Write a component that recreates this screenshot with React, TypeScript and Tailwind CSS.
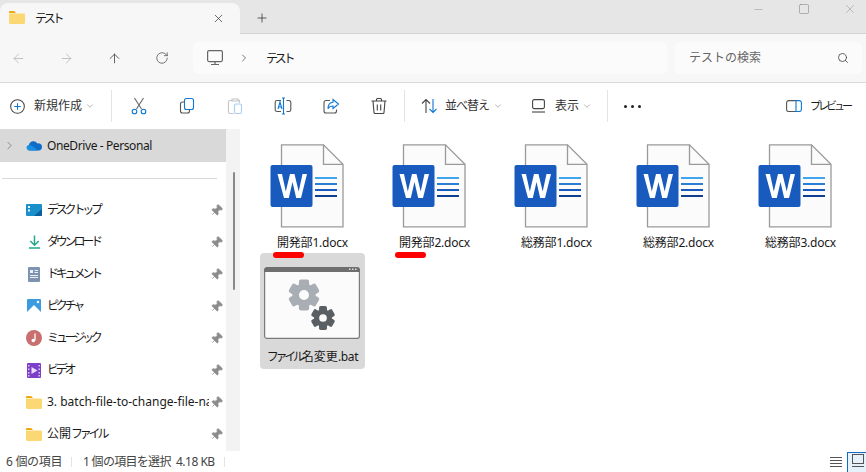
import { ArrowLeft, ArrowRight, ArrowUp, ChevronDown, ChevronRight, Minus, Pin, Plus, RotateCw, Search, Square, X } from "lucide-react";
import type { ReactNode } from "react";

const FONT = "font-['Noto_Sans','Noto_Sans_CJK_JP',sans-serif]";
const KANA = "tracking-[-3.2px]";

const FolderIcon = ({ className = "" }: { className?: string }) => (
  <svg viewBox="0 0 16 13" className={className}>
    <path d="M0 1.2C0 .5.5 0 1.2 0h3.6c.4 0 .7.2 1 .5L7 2H0z" fill="#f0a70f" />
    <path d="M0 2.5h14.8c.7 0 1.2.5 1.2 1.2v8.1c0 .7-.5 1.2-1.2 1.2H1.2C.5 13 0 12.500 0 11.800z" fill="#fcd874" />
  </svg>
);

const WordIcon = () => (
  <svg viewBox="0 0 74 84" className="w-[74px] h-[84px] mr-[11px]">
    <path d="M11.500.8h42l19.500 19.500v62.500h-61.500z" fill="#fbfbfb" stroke="#9a9a9a" strokeWidth="1.300" />
    <path d="M53.500.8v19.500h19.500" fill="none" stroke="#9a9a9a" strokeWidth="1.300" />
    <rect x="45" y="33" width="22" height="2" fill="#41a5ee" />
    <rect x="45" y="39" width="22" height="2" fill="#2b7cd3" />
    <rect x="45" y="45" width="22" height="2" fill="#185abd" />
    <rect x="45" y="51" width="22" height="2" fill="#103f91" />
    <rect x="0.500" y="21" width="42" height="42" rx="2" fill="#185abd" />
    <path d="M7.500 30h4.500l3.800 17.500L20 30h4.500l4.200 17.500L32.500 30H37l-6 24h-4.800l-3.700-16-3.700 16H14z" fill="#fff" />
  </svg>
);

const Gear = ({ x, y, r, fill }: { x: number; y: number; r: number; fill: string }) => (
  <g transform={`translate(${x} ${y})`}>
    {[0, 60, 120].map((a) => (
      <rect key={a} x={-r * 0.33} y={-r} width={r * 0.66} height={r * 2} rx={r * 0.14} fill={fill} transform={`rotate(${a})`} />
    ))}
    <circle r={r * 0.75} fill={fill} />
    <circle r={r * 0.32} fill="#fbfbfb" />
  </g>
);

const BatIcon = () => (
  <svg viewBox="0 0 96 72" className="w-24 h-[72px] mr-[1px]">
    <rect x=".6" y=".6" width="94.800" height="70.800" rx="2.500" fill="#fbfbfb" stroke="#7a7a7a" strokeWidth="1.200" />
    <path d="M.6 4.500V3C.6 1.700 1.700.6 3 .6h90c1.300 0 2.400 1.100 2.400 2.400v1.500z" fill="#6f6f6f" stroke="#6f6f6f" />
    <rect x="85" y="1.500" width="1.500" height="1.500" fill="#ddd" />
    <rect x="88" y="1.500" width="1.500" height="1.500" fill="#ddd" />
    <rect x="91" y="1.500" width="1.500" height="1.500" fill="#ddd" />
    <Gear x={40} y={28} r={15.500} fill="#a8aeb4" />
    <Gear x={59} y={51} r={12} fill="#5a5f63" />
  </svg>
);

const DocTile = ({ name }: { name: string }) => (
  <div className="w-[105px] h-[116px] flex flex-col items-center pt-[7px]">
    <WordIcon />
    <span className="mt-[7px] text-xs text-[#1a1a1a] whitespace-nowrap tracking-[-0.2px]">{name}</span>
  </div>
);

const Divider = () => <div className="w-px h-8 bg-[#e3e3e3]" />;

const DownSmall = () => <ChevronDown className="w-[10px] h-[10px] text-[#8a8a8a]" strokeWidth={1.500} />;

const ToolIcon = ({ children }: { children: ReactNode }) => (
  <div className="w-12 h-8 flex items-center justify-center">
    <svg viewBox="0 0 18 18" className="w-[18px] h-[18px]" fill="none" strokeWidth="1.100">
      {children}
    </svg>
  </div>
);

const SideRow = ({ icon, label }: { icon: ReactNode; label: ReactNode }) => (
  <div className="h-8 flex items-center pl-[26px] pr-[3px]">
    <div className="w-4 h-4 flex items-center justify-center shrink-0">{icon}</div>
    <span className="ml-[5px] w-[162px] overflow-hidden whitespace-nowrap text-xs text-[#1a1a1a]">{label}</span>
    <Pin className="ml-auto w-[13px] h-[13px] text-[#8c8c8c] fill-[#8c8c8c] rotate-45" strokeWidth={1.500} />
  </div>
);

const App = () => {
  return (
    <div className={`${FONT} w-[866px] h-[472px] overflow-hidden flex flex-col bg-white`}>
      {/* tabs */}
      <div className="h-[34px] shrink-0 bg-[#e6e6e6] border-b border-[#d3d3d3] flex items-end">
        <div className="w-[240px] h-[31px] -mb-px bg-[#f7f7f7] rounded-t-lg flex items-center pl-[9px] pr-[15px]">
          <FolderIcon className="w-4 h-[13px] -mt-[3px]" />
          <span className={`ml-[10px] text-xs text-[#1a1a1a] ${KANA}`}>テスト</span>
          <X className="ml-auto w-[13px] h-[13px] text-[#333]" strokeWidth={1.300} />
        </div>
        <div className="w-11 h-[31px] flex items-center justify-center">
          <Plus className="w-[14px] h-[14px] text-[#333]" strokeWidth={1.300} />
        </div>
        <div className="ml-auto -mr-[7px] flex self-start">
          <div className="w-[46px] h-[18px] flex items-center justify-center"><Minus className="w-[13px] h-[13px] text-[#999]" strokeWidth={1} /></div>
          <div className="w-[46px] h-[18px] flex items-center justify-center"><Square className="w-[12px] h-[12px] text-[#888]" strokeWidth={1.200} /></div>
          <div className="w-[46px] h-[18px] flex items-center justify-center"><X className="w-[14px] h-[14px] text-[#999]" strokeWidth={1} /></div>
        </div>
      </div>

      {/* address bar */}
      <div className="h-[49px] shrink-0 bg-[#f7f7f7] border-b border-[#d9d9d9] flex items-center">
        <div className="w-[193px] flex items-center">
          <div className="w-12 -ml-[6px] flex justify-center"><ArrowLeft className="w-[15px] h-[15px] text-[#b0b0b0]" strokeWidth={1.200} /></div>
          <div className="w-12 flex justify-center"><ArrowRight className="w-[15px] h-[15px] text-[#b0b0b0]" strokeWidth={1.200} /></div>
          <div className="w-12 flex justify-center"><ArrowUp className="w-[15px] h-[15px] text-[#333]" strokeWidth={1.200} /></div>
          <div className="w-12 flex justify-center"><RotateCw className="w-[14px] h-[14px] text-[#444]" strokeWidth={1.200} /></div>
        </div>
        <div className="w-[474px] h-8 rounded-md bg-[#fbfbfb] flex items-center pl-[14px]">
          <svg viewBox="0 0 16 16" className="w-4 h-4" fill="none" stroke="#666" strokeWidth="1.200">
            <rect x=".6" y=".6" width="14.800" height="11" rx="1.500" />
            <path d="M8 11.600v2.400M4 14.500h8" />
          </svg>
          <ChevronRight className="ml-[15px] w-3 h-3 text-[#333]" strokeWidth={1.300} />
          <span className={`ml-[16px] pt-px text-xs text-[#1a1a1a] ${KANA}`}>テスト</span>
        </div>
        <div className="ml-2 w-[187px] h-8 rounded-md bg-[#fbfbfb] flex items-center pl-[14px] pr-[13px]">
          <span className="text-xs text-[#666]">テストの検索</span>
          <Search className="ml-auto w-3 h-3 text-[#333]" strokeWidth={1.500} />
        </div>
      </div>

      {/* command bar */}
      <div className="h-[46px] shrink-0 bg-white flex items-center">
        <div className="w-[111px] flex items-center pl-[10px]">
          <svg viewBox="0 0 16 16" className="w-[15px] h-[15px]" fill="none" strokeWidth="1.100">
            <circle cx="8" cy="8" r="7.300" stroke="#444" />
            <path d="M8 4.500v7M4.500 8h7" stroke="#0f78d4" />
          </svg>
          <span className="ml-[9px] text-xs text-[#333]">新規作成</span>
          <span className="ml-[3px]"><DownSmall /></span>
        </div>
        <Divider />
        <div className="flex ml-[3px]">
          <ToolIcon>
            <path d="M4.500 1l7 11M13.500 1l-7 11" stroke="#666" />
            <circle cx="4.500" cy="14.500" r="2.300" stroke="#0f78d4" />
            <circle cx="13.500" cy="14.500" r="2.300" stroke="#0f78d4" />
          </ToolIcon>
          <ToolIcon>
            <rect x="6.500" y="1.500" width="9" height="11" rx="2" stroke="#0f78d4" />
            <path d="M6.500 5H4.500a2 2 0 0 0-2 2v7a2 2 0 0 0 2 2h5a2 2 0 0 0 2-2v-1.500" stroke="#555" />
          </ToolIcon>
          <ToolIcon>
            <path d="M6 3.500H4a1.500 1.500 0 0 0-1.500 1.500v10a1.500 1.500 0 0 0 1.500 1.500h3.500" stroke="#c4c4c4" />
            <path d="M6 2h6v2H6zM12 3.500h1.500V6" stroke="#c4c4c4" />
            <rect x="8.500" y="7" width="7" height="9.500" rx="1.500" stroke="#a8cdee" />
          </ToolIcon>
          <ToolIcon>
            <path d="M7 3.500H3a1.800 1.800 0 0 0-1.800 1.800v7.400A1.800 1.800 0 0 0 3 14.500h4M12.500 3.500H15a1.800 1.800 0 0 1 1.800 1.800v7.400a1.800 1.800 0 0 1-1.800 1.800h-2.500" stroke="#555" />
            <path d="M8 1h3M8 17h3M9.500 1v16" stroke="#0f78d4" />
            <path d="M4 12l2-7 2 7M4.800 10h2.500" stroke="#0f78d4" />
          </ToolIcon>
          <ToolIcon>
            <path d="M8 3.500H4a2 2 0 0 0-2 2v8.500a2 2 0 0 0 2 2h8.500a2 2 0 0 0 2-2v-1.500" stroke="#555" />
            <path d="M11 2.500l5.500 4.500L11 11.500V9c-2.500 0-4 .8-5 2.800 0-4 1.800-6.300 5-6.500z" stroke="#0f78d4" />
          </ToolIcon>
          <ToolIcon>
            <path d="M1.500 4h15M6.500 4V2.500c0-.6.4-1 1-1h3c.6 0 1 .4 1 1V4M3 4l1 11.500c0 .6.5 1 1 1h8c.5 0 1-.4 1-1L15 4M7.300 7.500v6M10.700 7.500v6" stroke="#444" />
          </ToolIcon>
        </div>
        <div className="ml-px"><Divider /></div>
        <div className="flex items-center ml-[16px]">
          <svg viewBox="0 0 17 16" className="w-[17px] h-4" fill="none" strokeWidth="1.100">
            <path d="M5 15V1.500M1 5.500l4-4 4 4" stroke="#444" />
            <path d="M12 1v13.500M8.500 11l3.500 3.500 3.500-3.500" stroke="#0f78d4" />
          </svg>
          <span className="ml-[7px] w-[43px] whitespace-nowrap text-xs text-[#333] tracking-[-1px]">並べ替え</span>
          <span className="ml-[5px]"><DownSmall /></span>
        </div>
        <div className="flex items-center ml-[29px]">
          <svg viewBox="0 0 13 14" className="w-[13px] h-[14px]" fill="none" stroke="#444" strokeWidth="1.100">
            <rect x=".6" y=".6" width="11.800" height="9" rx="1.500" />
            <path d="M0 13h13" />
          </svg>
          <span className="ml-[10px] text-xs text-[#333]">表示</span>
          <span className="ml-[3px]"><DownSmall /></span>
        </div>
        <div className="ml-[15px]"><Divider /></div>
        <div className="ml-[16px] flex gap-[4px]">
          <span className="w-[3px] h-[3px] rounded-full bg-[#222]" />
          <span className="w-[3px] h-[3px] rounded-full bg-[#222]" />
          <span className="w-[3px] h-[3px] rounded-full bg-[#222]" />
        </div>
        <div className="ml-auto flex items-center pr-[16px]">
          <svg viewBox="0 0 16 12" className="w-4 h-3" fill="none" strokeWidth="1.100">
            <path d="M10 .6H2.500A2 2 0 0 0 .6 2.500v7a2 2 0 0 0 1.900 2H10" stroke="#555" />
            <path d="M10 .6h3.500a2 2 0 0 1 1.900 1.900v7a2 2 0 0 1-1.900 2H10z" stroke="#0f78d4" />
          </svg>
          <span className="ml-[8px] w-[40px] whitespace-nowrap text-[11px] text-[#1a1a1a] tracking-[-3px]">プレビュー</span>
        </div>
      </div>

      {/* content */}
      <div className="flex-1 min-h-0 flex">
        <aside className="w-[226px] shrink-0 flex flex-col">
          <div className="h-[33px] bg-[#d9d9d9] flex items-center pl-[3px]">
            <ChevronRight className="w-[13px] h-[13px] text-[#777]" strokeWidth={1.500} />
            <svg viewBox="0 0 16 11" className="ml-[10px] w-4 h-[11px]">
              <path d="M3.500 10.500A3 3 0 0 1 3 5a4.500 4.500 0 0 1 8.300-1.500A3.500 3.500 0 0 1 16 7c0 2-1.500 3.500-3 3.500z" fill="#0f6cc8" />
              <path d="M3.500 10.500A3 3 0 0 1 1 6c2-1.500 4-1 6 .5l5 4z" fill="#1a8ee0" />
            </svg>
            <span className="ml-[5px] text-xs text-[#1a1a1a] tracking-[-0.4px]">OneDrive - Personal</span>
          </div>
          <div className="mt-4 ml-[2px] w-[215px] h-px bg-[#d9d9d9]" />
          <div className="mt-[15px]">
            <SideRow label={<span className={KANA}>デスクトップ</span>} icon={
              <svg viewBox="0 0 16 12" className="w-4 h-3">
                <rect width="16" height="12" rx="1" fill="#1b8fc9" />
                <path d="M2 2h2v2H2zM2 5.500h2v2H2z" fill="#e6f7ff" />
                <path d="M8 12l8-7v6a1 1 0 0 1-1 1z" fill="#0b5f9c" />
              </svg>
            } />
            <SideRow label={<span className={KANA}>ダウンロード</span>} icon={
              <svg viewBox="0 0 14 15" className="w-[13px] h-[14px]" fill="none" stroke="#22a68c" strokeWidth="1.600">
                <path d="M7 .5v10M2.500 6.500L7 11l4.500-4.500M1 14h12" />
              </svg>
            } />
            <SideRow label={<span className={KANA}>ドキュメント</span>} icon={
              <svg viewBox="0 0 12 15" className="w-3 h-[15px]">
                <rect width="12" height="15" rx="1" fill="#7d93b2" />
                <path d="M2 3h3v3H2zM6.500 3H10v1H6.500zM6.500 5H10v1H6.500zM2 8h8v1H2zM2 10h8v1H2z" fill="#eef2f7" />
              </svg>
            } />
            <SideRow label={<span className={KANA}>ピクチャ</span>} icon={
              <svg viewBox="0 0 14 14" className="w-[14px] h-[14px]">
                <rect width="14" height="14" rx="1" fill="#3a9be0" />
                <path d="M0 13l7-7 7 7v1H0z" fill="#fff" />
                <circle cx="11" cy="3" r="1.300" fill="#fff" />
              </svg>
            } />
            <SideRow label={<span className={KANA}>ミュージック</span>} icon={
              <svg viewBox="0 0 16 16" className="w-4 h-4">
                <circle cx="8" cy="8" r="8" fill="#c96f6f" />
                <path d="M9 3.500v6.700" stroke="#fff" strokeWidth="1.300" />
                <circle cx="7.300" cy="10.500" r="1.800" fill="#fff" />
              </svg>
            } />
            <SideRow label={<span className={KANA}>ビデオ</span>} icon={
              <svg viewBox="0 0 14 15" className="w-[14px] h-[15px]">
                <rect width="14" height="15" rx="1" fill="#7b3fc8" />
                <path d="M4.500 4l6 3.500-6 3.500z" fill="#e9dcff" />
                <path d="M1 2h1.500v1.500H1zM1 5.500h1.500V7H1zM1 9h1.500v1.500H1zM1 12h1.500v1.500H1zM11.500 2H13v1.500h-1.500zM11.500 5.500H13V7h-1.500zM11.500 9H13v1.500h-1.500zM11.500 12H13v1.500h-1.500z" fill="#d8c6f5" />
              </svg>
            } />
            <SideRow label="3. batch-file-to-change-file-name" icon={<FolderIcon className="w-4 h-[13px]" />} />
            <SideRow label={<>公開<span className={KANA}>ファイル</span></>} icon={<FolderIcon className="w-4 h-[13px]" />} />
          </div>
        </aside>

        {/* sidebar scrollbar */}
        <div className="w-[14px] shrink-0 bg-[#f3f3f3] relative">
          <div className="absolute left-[7px] top-[43px] w-[2px] h-[118px] rounded-full bg-[#8a8a8a]" />
        </div>

        <main className="flex-1 min-w-0 pl-5 pt-2 relative">
          <div className="grid grid-cols-[repeat(5,105px)] gap-x-[17px]">
            <DocTile name="開発部1.docx" />
            <DocTile name="開発部2.docx" />
            <DocTile name="総務部1.docx" />
            <DocTile name="総務部2.docx" />
            <DocTile name="総務部3.docx" />
            <div className="w-[105px] h-[116px] rounded-sm bg-[#d9d9d9] flex flex-col items-center pt-[14px]">
              <BatIcon />
              <span className="mt-[10px] text-xs text-[#1a1a1a] whitespace-nowrap">
                <span className={KANA}>ファイル</span>名変更<span className="tracking-[-0.3px]">.bat</span>
              </span>
            </div>
          </div>
          {/* red marks drawn on top of the screenshot */}
          <div className="absolute left-[33px] top-[123px] w-[31px] h-[6px] rounded-full bg-[#ff0000]" />
          <div className="absolute left-[155px] top-[123px] w-[31px] h-[6px] rounded-full bg-[#ff0000]" />
        </main>
      </div>

      {/* status bar */}
      <div className="h-[21px] shrink-0 bg-white flex items-center pt-px text-xs text-[#444]">
        <span className="ml-[6px] w-[65px] tracking-[-0.3px]">6 個の項目</span>
        <div className="w-px h-[10px] bg-[#e3e3e3]" />
        <span className="ml-[11px] w-[93px] whitespace-nowrap tracking-[-0.7px]">1 個の項目を選択</span>
        <span className="w-[37px] whitespace-nowrap tracking-[-0.5px]">4.18 KB</span>
        <div className="ml-[11px] w-px h-[10px] bg-[#e3e3e3]" />
        <div className="ml-auto flex items-center">
          <svg viewBox="0 0 12 10" className="w-3 h-[10px]" fill="none" stroke="#555" strokeWidth="1">
            <path d="M0 .5h12M0 3.500h12M0 6.500h12M0 9.500h12" />
          </svg>
          <div className="ml-[5px] w-[19px] h-[21px] border-l border-t border-[#0f6cbd] bg-[#e5f1fb] flex items-start justify-center pt-[1px] pl-[1px]">
            <svg viewBox="0 0 12 14" className="w-3 h-[14px]" fill="none" stroke="#555" strokeWidth="1">
              <rect x=".5" y=".5" width="11" height="9" />
              <path d="M0 12.500h12" />
            </svg>
          </div>
        </div>
      </div>
    </div>
  );
};

export default App;
